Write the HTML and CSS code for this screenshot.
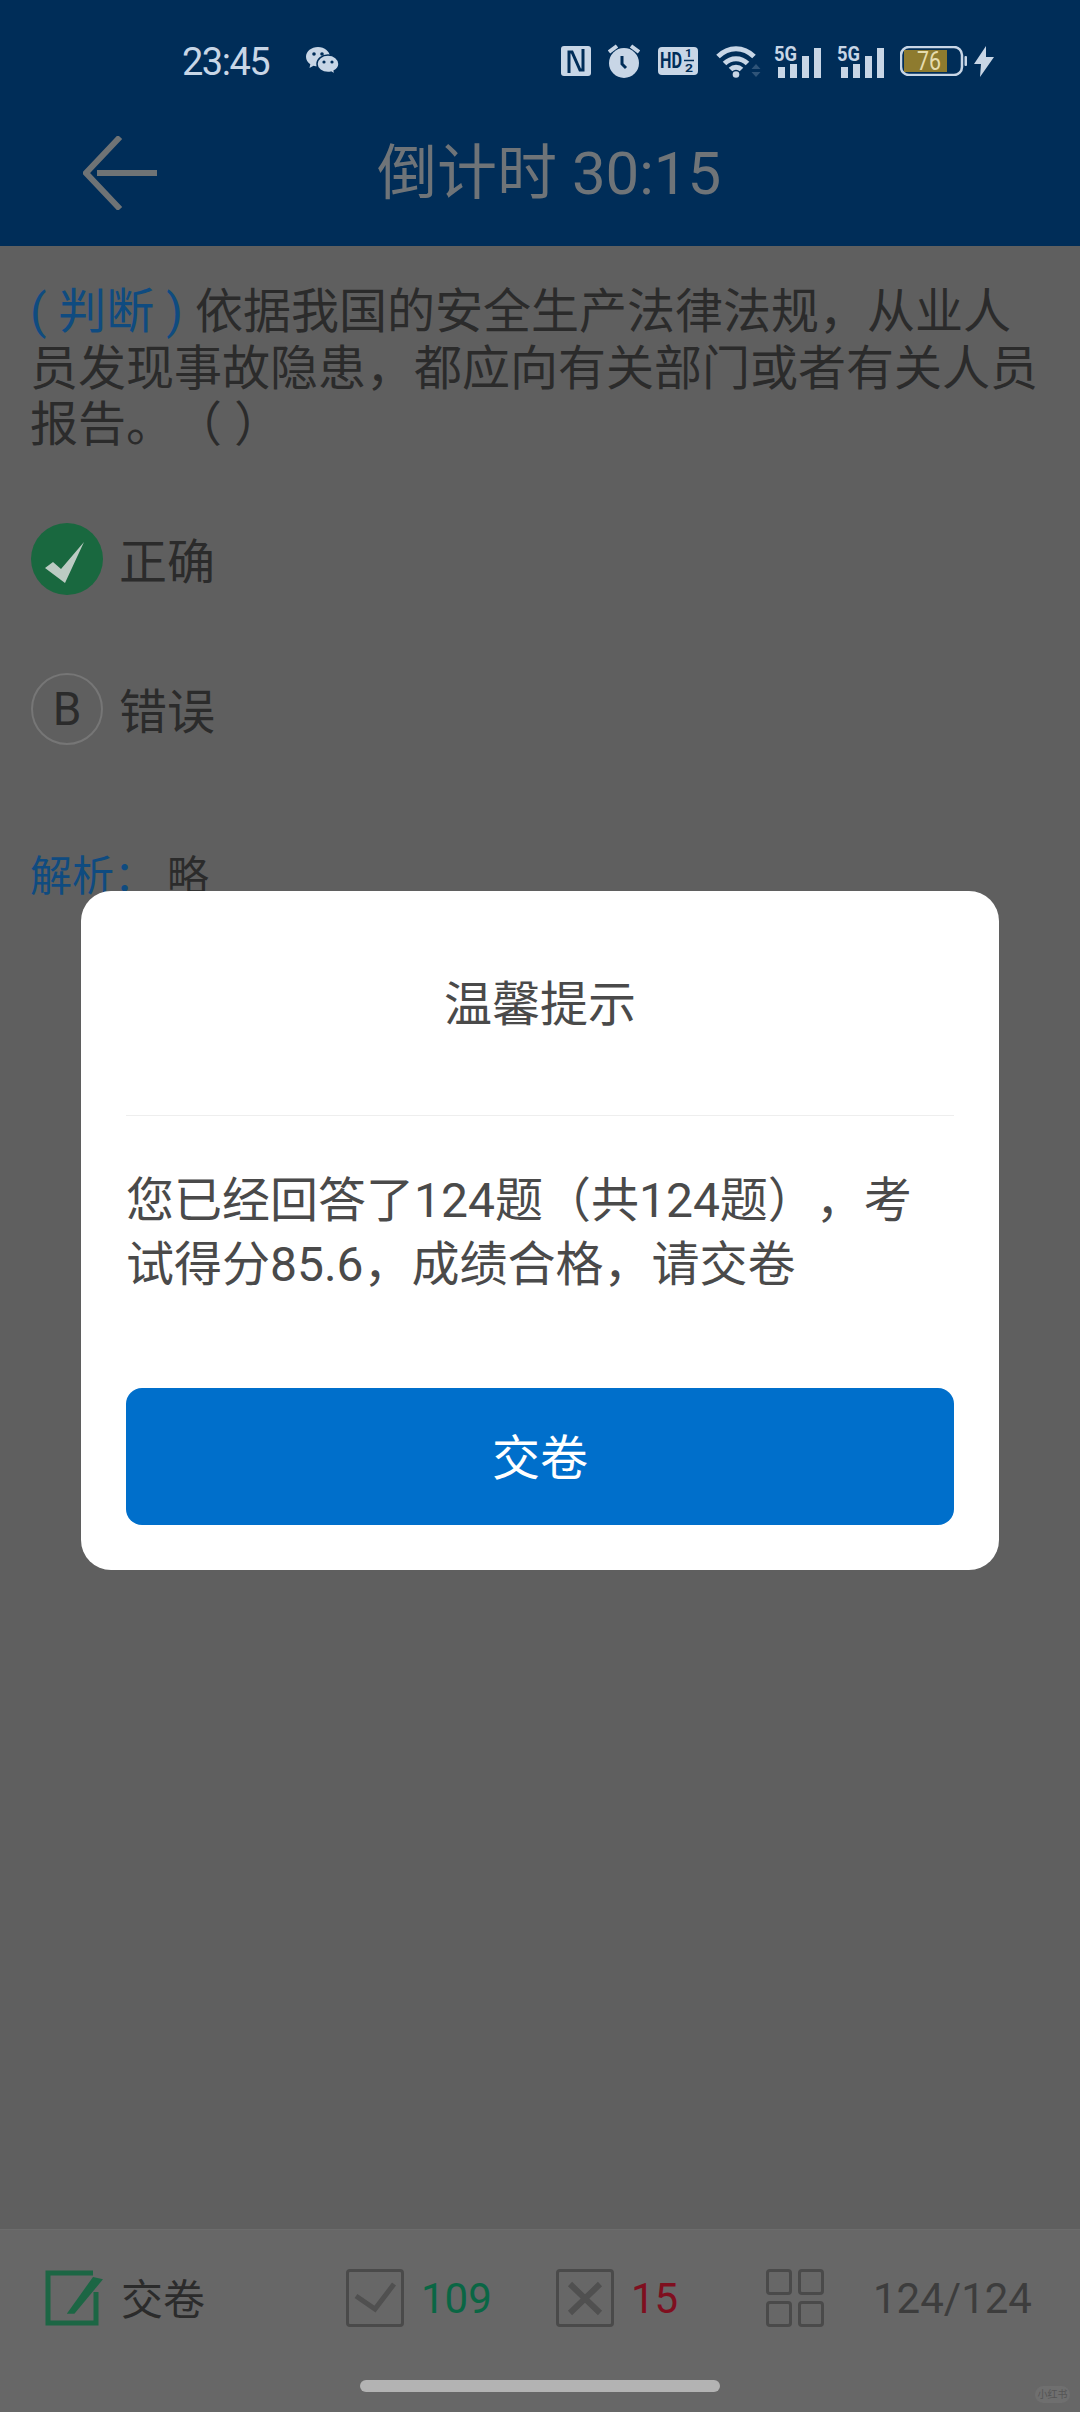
FILE: index.html
```html
<!DOCTYPE html>
<html lang="zh">
<head>
    <meta charset="utf-8">
    <title>倒计时</title>
    <link rel="stylesheet" href="styles.css">
</head>
<body>
    <header class="header">
        <div class="status-bar">
            <div class="status-left">
                <span class="clock">23:45</span>
                <svg class="ic-wechat" width="33" height="28" viewBox="0 0 33 28">
                    <path class="fill" d="M12 0C5.400 0 0 4.300 0 9.800c0 3.100 1.700 5.700 4.300 7.500L3.500 21l4-2.300c1.400.4 2.900.6 4.500.6 6.600 0 12-4.300 12-9.500S18.600 0 12 0z"/>
                    <path class="fill gap" d="M22 8c-6 0-11 4-11 9s5 8.500 11 8.500c1 0 2-.1 3-.4l4 2.400-.8-3.500c2.900-1.600 4.800-4 4.800-7 0-5-5-9-11-9z"/>
                    <circle class="dark" cx="8" cy="7" r="1.800"/><circle class="dark" cx="16" cy="7" r="1.800"/>
                    <circle class="dark" cx="18" cy="15" r="1.600"/><circle class="dark" cx="26" cy="15" r="1.600"/>
                </svg>
            </div>
            <div class="status-right">
                <svg class="ic-nfc" width="30" height="30" viewBox="0 0 30 30">
                    <rect class="fill" width="30" height="30" rx="3"/>
                    <path class="cut" d="M8 27V6h3l8 18h3V3" />
                </svg>
                <svg class="ic-alarm" width="32" height="34" viewBox="0 0 32 34">
                    <circle class="fill" cx="16" cy="19" r="15"/>
                    <path class="line" d="M1 8l8-6M31 8l-8-6"/>
                    <path class="cut thin" d="M14 12v8l4 4"/>
                </svg>
                <svg class="ic-hd" width="40" height="28" viewBox="0 0 40 28">
                    <rect class="fill" width="40" height="28" rx="4"/>
                    <text class="dark-text" x="2" y="21" font-size="22" textLength="22" lengthAdjust="spacingAndGlyphs">HD</text>
                    <text class="dark-text" x="27" y="10" font-size="11" textLength="7" lengthAdjust="spacingAndGlyphs">1</text>
                    <path class="cut hair" d="M26 13.500h10"/>
                    <text class="dark-text" x="27" y="25" font-size="11" textLength="8" lengthAdjust="spacingAndGlyphs">2</text>
                </svg>
                <svg class="ic-wifi" width="45" height="34" viewBox="0 0 45 34">
                    <path class="line wide" d="M2 12.500C12.500 2 27.500 2 38 12.500"/>
                    <path class="line wide" d="M8.500 19.500C15 13 25 13 31.500 19.500"/>
                    <path class="line wide" d="M14.500 25.500C17.500 22.500 22.500 22.500 25.500 25.500"/>
                    <circle class="fill" cx="20" cy="30.500" r="3.300"/>
                    <path class="dim" d="M40 20l4.500 5h-9zM35.500 28h9L40 33z"/>
                </svg>
                <svg class="ic-signal" width="47" height="37" viewBox="0 -4 47 37">
                    <text class="fill-text" x="0" y="16" font-size="21" textLength="23" lengthAdjust="spacingAndGlyphs">5G</text>
                    <rect class="fill" x="4" y="22" width="7" height="11"/>
                    <rect class="fill" x="16" y="19" width="7" height="14"/>
                    <rect class="fill" x="28" y="11" width="7" height="22"/>
                    <rect class="fill" x="40" y="3" width="7" height="30"/>
                </svg>
                <svg class="ic-signal" width="47" height="37" viewBox="0 -4 47 37">
                    <text class="fill-text" x="0" y="16" font-size="21" textLength="23" lengthAdjust="spacingAndGlyphs">5G</text>
                    <rect class="fill" x="4" y="22" width="7" height="11"/>
                    <rect class="fill" x="16" y="19" width="7" height="14"/>
                    <rect class="fill" x="28" y="11" width="7" height="22"/>
                    <rect class="fill" x="40" y="3" width="7" height="30"/>
                </svg>
                <svg class="ic-battery" width="67" height="30" viewBox="0 0 67 30">
                    <rect class="outline" x="1" y="1" width="61" height="28" rx="8"/>
                    <rect class="level" x="4" y="4" width="43" height="22"/>
                    <rect class="fill" x="64.500" y="10" width="2.500" height="10" rx="1"/>
                    <text class="level-text" x="17" y="24" font-size="25" textLength="24" lengthAdjust="spacingAndGlyphs">76</text>
                </svg>
                <svg class="ic-bolt" width="20" height="31" viewBox="0 0 20 31">
                    <path class="fill" d="M12 0L0 18h7L6 31l14-20h-8z"/>
                </svg>
            </div>
        </div>
        <div class="toolbar">
            <svg class="back" width="74" height="74" viewBox="0 0 74 74">
                <path d="M37 1L3 37l34 36M14 37h60"/>
            </svg>
            <h1 class="title">倒计时 30:15</h1>
        </div>
    </header>

    <main class="content">
        <p class="question"><span class="tag">( 判断 ) </span>依据我国的安全生产法律法规，从业人员发现事故隐患，都应向有关部门或者有关人员报告。（ ）</p>
        <div class="option">
            <svg class="option-icon" width="72" height="72" viewBox="0 0 72 72">
                <circle cx="36" cy="36" r="36" fill="#19683f"/>
                <path fill="#bccbc3" d="M14 45l8-6 8 7 23-27-19 41z"/>
            </svg>
            <span class="option-text">正确</span>
        </div>
        <div class="option option-b">
            <span class="letter">B</span>
            <span class="option-text">错误</span>
        </div>
        <p class="analysis"><span class="analysis-label">解析：</span><span class="analysis-text">略</span></p>
    </main>

    <footer class="bottom-bar">
        <div class="bar-row">
            <div class="bar-group submit">
                <svg width="60" height="56" viewBox="0 0 60 56">
                    <path class="edit-box" d="M48 3H3v50h48V22"/>
                    <path class="edit-pen" d="M48 7l10 2.300-28.600 34.400h-7.600z"/>
                </svg>
                <span class="submit-text">交卷</span>
            </div>
            <div class="bar-group right-count">
                <span class="box">
                    <svg width="52" height="52" viewBox="0 0 52 52"><path class="mark" d="M7 24l19 13L45 12"/></svg>
                </span>
                <span class="num green">109</span>
            </div>
            <div class="bar-group wrong-count">
                <span class="box">
                    <svg width="52" height="52" viewBox="0 0 52 52"><path class="mark heavy" d="M11 12l30 29M41 12L11 41"/></svg>
                </span>
                <span class="num red">15</span>
            </div>
            <div class="bar-group progress">
                <div class="grid-icon"><i></i><i></i><i></i><i></i></div>
                <span class="num gray">124/124</span>
            </div>
        </div>
        <div class="home-indicator"></div>
        <span class="watermark">小红书</span>
    </footer>

    <div class="dialog-layer">
        <div class="dialog">
            <div class="dialog-title">温馨提示</div>
            <div class="dialog-body">您已经回答了124题（共124题），考试得分85.6，成绩合格，请交卷</div>
            <button class="dialog-btn">交卷</button>
        </div>
    </div>
</body>
</html>
```

FILE: styles.css
```css
* { box-sizing: border-box; }
html, body { margin: 0; padding: 0; }
body {
    position: relative;
    display: flex;
    flex-direction: column;
    width: 1080px;
    height: 2412px;
    overflow: hidden;
    background: #5f5f5f;
    font-family: Roboto, "Noto Sans CJK SC", sans-serif;
    color: #2b2b2b;
    text-spacing-trim: space-all;
}

/* header */
.header { height: 246px; background: #002d58; }
.status-bar {
    display: flex;
    justify-content: space-between;
    align-items: center;
    height: 100px;
    padding: 22px 86px 0 182px;
}
.status-left { display: flex; align-items: center; }
.clock { font-size: 38px; color: #c8d6e6; letter-spacing: -1.500px; line-height: 44px; padding-top: 2px; }
.ic-wechat { margin-left: 37px; }
.status-right { display: flex; align-items: center; }
.ic-alarm { margin-left: 17px; }
.ic-hd { margin-left: 18px; }
.ic-wifi { margin-left: 18px; }
.ic-signal { margin: 0 0 4px 13px; }
.ic-signal + .ic-signal { margin-left: 16px; }
.ic-battery { margin-left: 16px; }
.ic-bolt { margin-left: 7px; }

.fill { fill: #c8d6e6; }
.gap { stroke: #002d58; stroke-width: 1.5; }
.dark { fill: #002d58; }
.cut { fill: none; stroke: #002d58; stroke-width: 3; }
.thin { stroke-width: 3; }
.hair { stroke-width: 1.5; }
.line { fill: none; stroke: #c8d6e6; stroke-width: 4; }
.wide { stroke-width: 5; }
.dim { fill: #2f5478; }
.dark-text { fill: #002d58; font-weight: 700; }
.fill-text { fill: #c8d6e6; font-weight: 700; }
.outline { fill: none; stroke: #c8d6e6; stroke-width: 2.500; }
.level { fill: #8e7b2f; }
.level-text { fill: #e6dcae; }

.toolbar { display: flex; align-items: center; height: 146px; padding-left: 83px; }
.back { fill: none; stroke: #6f7375; stroke-width: 6; }
.title {
    margin: 0 0 12px 220px;
    font-size: 60px;
    font-weight: 400;
    color: #6f7478;
    white-space: nowrap;
}

/* question */
.content { flex: 1; padding: 38px 30px 0; font-size: 48px; }
.question { margin: 0 0 69px; line-height: 56.500px; }
.tag { color: #0f4b80; }
.option { display: flex; align-items: center; height: 72px; padding-left: 1px; }
.option-b { margin-top: 78px; }
.option-text { margin: 0 0 2px 16px; }
.letter {
    display: flex;
    align-items: center;
    justify-content: center;
    width: 72px;
    height: 72px;
    border: 2px solid #767676;
    border-radius: 50%;
    font-size: 46px;
}
.analysis { display: flex; margin: 104px 0 0; font-size: 42px; line-height: 56px; }
.analysis-label { color: #0f4b80; white-space: nowrap; }
.analysis-text { margin-left: 11px; }

/* bottom */
.bottom-bar {
    position: relative;
    height: 183px;
    padding-top: 39px;
    background: #676767;
    border-top: 1px solid #6c6c6c;
}
.bar-row { display: flex; height: 58px; }
.bar-group { display: flex; align-items: center; }
.submit { margin-left: 45px; width: 301px; }
.submit-text { margin: 0 0 3px 16px; font-size: 42px; }
.edit-box { fill: none; stroke: #1c6644; stroke-width: 5; }
.edit-pen { fill: #1c6644; }
.right-count { width: 210px; }
.wrong-count { width: 210px; }
.box {
    display: flex;
    align-items: center;
    justify-content: center;
    width: 58px;
    height: 58px;
    border: 3px solid #4a4a4a;
    border-radius: 4px;
}
.mark { fill: none; stroke: #505050; stroke-width: 5; }
.heavy { stroke-width: 6; }
.num { margin-left: 17px; font-size: 42px; }
.green { color: #0a6644; }
.red { color: #7f0f1f; }
.gray { margin-left: 49px; color: #3d3d3d; }
.grid-icon {
    display: grid;
    grid-template-columns: 26px 26px;
    grid-template-rows: 26px 26px;
    gap: 6px;
}
.grid-icon i { border: 3px solid #4a4a4a; border-radius: 4px; }

.home-indicator {
    width: 360px;
    height: 12px;
    margin: 53px auto 0;
    background: #b3b3b3;
    border-radius: 6px;
}
.watermark {
    position: absolute;
    right: 10px;
    bottom: 9px;
    width: 35px;
    height: 17px;
    background: #6f6f6f;
    border-radius: 9px;
    font-size: 10px;
    line-height: 17px;
    text-align: center;
    color: #555;
}

/* dialog */
.dialog-layer {
    position: absolute;
    top: 0;
    left: 0;
    right: 0;
    bottom: 0;
    display: flex;
    justify-content: center;
    padding-top: 891px;
}
.dialog {
    width: 918px;
    height: 679px;
    padding: 0 45px;
    background: #fff;
    border-radius: 30px;
    color: #4a4a4a;
    font-size: 48px;
}
.dialog-title {
    height: 225px;
    padding-top: 78px;
    line-height: 72px;
    text-align: center;
    border-bottom: 1px solid #eee;
}
.dialog-body { margin-top: 53px; line-height: 64px; }
.dialog-btn {
    display: block;
    width: 100%;
    height: 137px;
    margin-top: 91px;
    padding-bottom: 6px;
    border: 0;
    border-radius: 16px;
    background: #006fcb;
    color: #fff;
    font-family: inherit;
    font-size: 48px;
}
```
